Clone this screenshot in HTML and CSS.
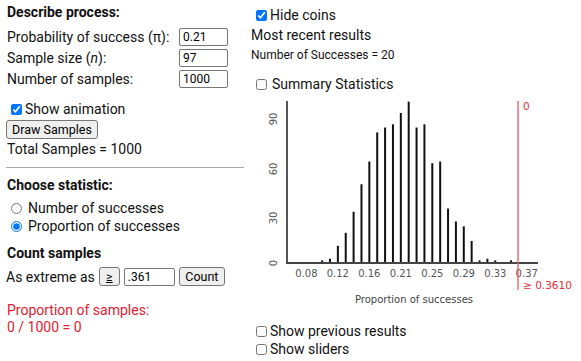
FILE: index.html
```html
<!DOCTYPE html>
<html lang="en">
<head>
    <meta charset="UTF-8">
    <meta name="viewport" content="width=device-width, initial-scale=1.0">
    <title>One Proportion Inference</title>
    <link rel="stylesheet" href="styles.css">
</head>
<body>
    <div class="applet">
        <div class="controls">
            <h3 class="heading first">Describe process:</h3>
            <div class="process-grid">
                <label>Probability of success (&pi;):</label>
                <input type="text" class="num-input" value="0.21">
                <label>Sample size (<i>n</i>):</label>
                <input type="text" class="num-input" value="97">
                <label>Number of samples:</label>
                <input type="text" class="num-input" value="1000">
            </div>

            <label class="check-row animate"><input type="checkbox" checked>Show animation</label>
            <button class="btn draw">Draw Samples</button>
            <div class="total">Total Samples = 1000</div>

            <hr class="divider">

            <h3 class="heading">Choose statistic:</h3>
            <label class="radio-row first-radio"><input type="radio" name="stat">Number of successes</label>
            <label class="radio-row"><input type="radio" name="stat" checked>Proportion of successes</label>

            <h3 class="heading count-head">Count samples</h3>
            <div class="count-row">
                <span>As extreme as</span>
                <button class="btn op">&ge;</button>
                <input type="text" class="num-input cutoff" value=".361">
                <button class="btn count">Count</button>
            </div>

            <div class="result">
                Proportion of samples:<br>
                0 / 1000 = 0
            </div>
        </div>

        <div class="output">
            <label class="check-row"><input type="checkbox" checked>Hide coins</label>
            <div class="recent">Most recent results</div>
            <div class="successes">Number of Successes = 20</div>
            <label class="check-row summary"><input type="checkbox"> Summary Statistics</label>

            <svg class="dotplot" id="dotplot" width="329" height="226" viewBox="0 0 329 226"></svg>

            <label class="check-row previous"><input type="checkbox">Show previous results</label>
            <label class="check-row"><input type="checkbox">Show sliders</label>
        </div>
    </div>

    <script>
        // counts of successes out of n = 97, for 1000 samples
        const counts = {
            10: 1, 11: 2, 12: 10, 13: 18, 14: 31, 15: 48, 16: 62, 17: 80,
            18: 83, 19: 85, 20: 92, 21: 99, 22: 83, 23: 85, 24: 61, 25: 62,
            26: 33, 27: 25, 28: 22, 29: 13, 30: 1, 31: 2, 32: 1, 34: 1
        };

        const NS = 'http://www.w3.org/2000/svg';
        const svg = document.getElementById('dotplot');
        const baseY = 169;
        const scaleY = 1.62;
        const xOf = k => 259 - (34 - k) * 7.87;

        function add(tag, attrs, text) {
            const el = document.createElementNS(NS, tag);
            for (const key in attrs) el.setAttribute(key, attrs[key]);
            if (text !== undefined) el.textContent = text;
            svg.appendChild(el);
            return el;
        }

        // bars
        Object.keys(counts).forEach(k => {
            const h = counts[k] * scaleY;
            add('rect', { x: xOf(+k) - 1, y: baseY - h, width: 2, height: h, fill: '#111' });
        });

        // axes
        add('line', { x1: 35, y1: 8, x2: 35, y2: 171, stroke: '#555', 'stroke-width': 2 });
        add('line', { x1: 34, y1: 170, x2: 286, y2: 170, stroke: '#444', 'stroke-width': 2 });

        // x tick labels
        [8, 12, 16, 20, 24, 28, 32, 36].forEach(k => {
            add('text', { x: xOf(k), y: 184, class: 'tick', 'text-anchor': 'middle' }, (k / 97).toFixed(2));
        });

        // y tick labels
        [[0, 170], [30, 125], [60, 76], [90, 26]].forEach(([v, y]) => {
            add('text', { x: 0, y: 0, class: 'tick', 'text-anchor': 'middle',
                transform: `translate(25 ${y}) rotate(-90)` }, v);
        });

        add('text', { x: 162, y: 210, class: 'axis-title', 'text-anchor': 'middle' }, 'Proportion of successes');

        // cutoff line
        add('line', { x1: 266, y1: 8, x2: 266, y2: 197, stroke: '#e85a61', 'stroke-width': 1.3 });
        add('text', { x: 271, y: 17, class: 'cut-label' }, '0');
        add('text', { x: 271, y: 196, class: 'cut-label' }, '\u2265 0.3610');
    </script>
</body>
</html>
```

FILE: styles.css
```css
* {
    box-sizing: border-box;
}

body {
    margin: 0;
    font-family: Roboto, 'Liberation Sans', sans-serif;
    font-size: 14px;
    line-height: 16px;
    color: #111;
    background: #fff;
}

.applet {
    display: flex;
}

.controls {
    width: 246px;
    padding: 4px 2px 0 7px;
}

.output {
    padding: 7px 0 0 6px;
}

.heading {
    margin: 0;
    font-size: 14px;
    line-height: 16px;
    font-weight: bold;
}

.process-grid {
    display: grid;
    grid-template-columns: 172px 49px;
    grid-auto-rows: 18px;
    row-gap: 3px;
    margin-top: 8px;
    align-items: center;
}

.num-input {
    width: 49px;
    height: 18px;
    padding: 0 3px;
    border: 1px solid #767676;
    border-radius: 2px;
    font-family: Roboto, 'Liberation Sans', sans-serif;
    font-size: 12px;
    color: #000;
}

.check-row,
.radio-row {
    display: flex;
    align-items: center;
    height: 16px;
}

.check-row input,
.radio-row input {
    width: 11px;
    height: 11px;
    margin: 0 3px 0 4px;
}

.animate {
    margin-top: 13px;
}

.btn {
    font-family: Roboto, 'Liberation Sans', sans-serif;
    font-size: 12.5px;
    color: #000;
    background: #efefef;
    border: 1px solid #767676;
    border-radius: 3px;
    height: 19px;
    padding: 0 6px;
    white-space: nowrap;
}

.draw {
    display: block;
    margin: 3px 0 0 -1px;
    width: 92px;
    padding: 0;
}

.total {
    margin-top: 2px;
}

.divider {
    border: 0;
    border-top: 1px solid #a8a8a8;
    margin: 10px 0 0 -1px;
}

.divider + .heading {
    margin-top: 9px;
}

.radio-row {
    margin-top: 2px;
}

.first-radio {
    margin-top: 7px;
}

.radio-row input {
    margin-right: 6px;
}

.count-head {
    margin-top: 11px;
}

.count-row {
    display: flex;
    align-items: center;
    gap: 4px;
    margin-top: 6px;
    margin-left: -1px;
}

.op {
    width: 21px;
    padding: 0;
    text-decoration: underline;
}

.cutoff {
    width: 51px;
}

.count {
    width: 46px;
    padding: 0;
}

.result {
    margin-top: 16px;
    color: #e3202f;
    line-height: 17px;
}

.recent {
    margin-top: 4px;
    margin-left: -1px;
}

.successes {
    margin-top: 5px;
    margin-left: -1px;
    font-size: 12px;
    line-height: 14px;
}

.summary {
    margin-top: 14px;
}

.summary input {
    margin-right: 5px;
}

.dotplot {
    display: block;
    margin: 1px 0 0 0;
}

.tick {
    font-family: 'DejaVu Sans', sans-serif;
    font-size: 10px;
    fill: #555;
}

.axis-title {
    font-family: 'DejaVu Sans', sans-serif;
    font-size: 10px;
    fill: #444;
}

.cut-label {
    font-family: 'DejaVu Sans', sans-serif;
    font-size: 10.5px;
    fill: #e4303c;
}

.previous {
    margin-top: 4px;
}

.previous + .check-row {
    margin-top: 2px;
}
```
